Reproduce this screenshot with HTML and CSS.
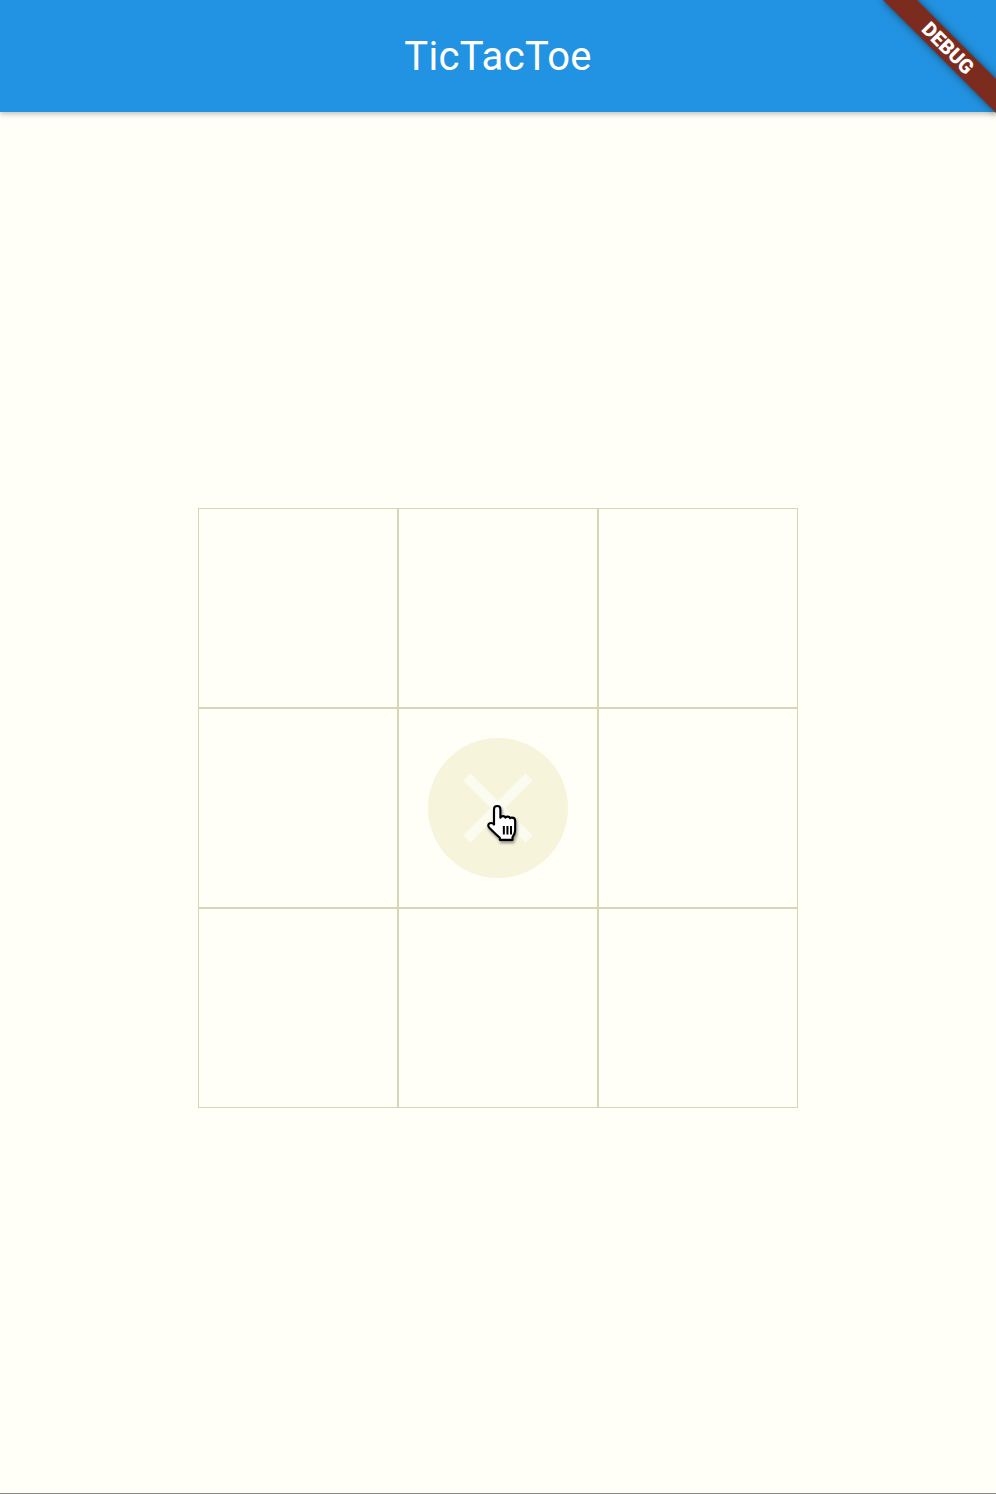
FILE: index.html
```html
<!DOCTYPE html>
<html lang="en">
<head>
<meta charset="utf-8">
<title>TicTacToe</title>
<link rel="stylesheet" href="styles.css">
</head>
<body>
<div class="app">
  <header class="appbar">
    <h1 class="title">TicTacToe</h1>
  </header>
  <main class="body">
    <div class="board">
      <div class="cell"></div>
      <div class="cell"></div>
      <div class="cell"></div>
      <div class="cell"></div>
      <div class="cell">
        <div class="splash">
          <span class="xbar xbar-a"></span>
          <span class="xbar xbar-b"></span>
        </div>
        <svg class="cursor" width="34" height="38" viewBox="0 0 32 36" aria-hidden="true">
          <path d="M10.5 1 C12.5 1 13.5 2.3 13.5 4 L13.5 12 C14 11 15 10.5 16 10.5 C17.3 10.5 18 11.2 18.3 12 C18.8 11.4 19.5 11 20.5 11 C21.7 11 22.5 11.8 22.7 12.6 C23.2 12.2 23.8 12 24.5 12 C26 12 27.5 13 27.5 15 L27.5 24 C27.5 27 26 29 25 30.5 L25 33 L13 33 L13 31 C10 28.5 6 24.5 3 21.5 C1.5 20 1.8 18 3.5 17.3 C5 16.7 6.5 17.3 7.5 18.5 L7.5 4 C7.5 2.3 8.5 1 10.5 1 Z" fill="#fff" stroke="#000" stroke-width="2" stroke-linejoin="round"/>
          <path d="M16.8 20 V28 M20.2 20 V28 M23.6 20 V28" stroke="#000" stroke-width="1.9"/>
        </svg>
      </div>
      <div class="cell"></div>
      <div class="cell"></div>
      <div class="cell"></div>
      <div class="cell"></div>
    </div>
  </main>
  <div class="banner-clip">
    <div class="banner">DEBUG</div>
  </div>
</div>
</body>
</html>
```

FILE: styles.css
```css
html, body {
  margin: 0;
  padding: 0;
}
body {
  background: #fffff8;
  font-family: Roboto, "Liberation Sans", sans-serif;
}
.app {
  position: relative;
  width: 996px;
  height: 1494px;
  overflow: hidden;
  box-sizing: border-box;
  border-bottom: 1px solid #8a8a84;
}
.appbar {
  position: relative;
  z-index: 2;
  height: 112px;
  background: #2293e2;
  display: flex;
  align-items: center;
  justify-content: center;
  box-shadow: 0 2px 4px rgba(0, 0, 0, 0.16), 0 4px 6px rgba(0, 0, 0, 0.07);
}
.title {
  margin: 0;
  padding-top: 2px;
  color: #ffffff;
  font-size: 40px;
  font-weight: 400;
  line-height: 1;
  letter-spacing: 0.3px;
}
.body {
  display: flex;
  justify-content: center;
  padding-top: 396px;
}
.board {
  display: grid;
  grid-template-columns: repeat(3, 200px);
  grid-template-rows: repeat(3, 200px);
}
.cell {
  position: relative;
  box-sizing: border-box;
  border: 1px solid #d8d6b9;
  display: flex;
  align-items: center;
  justify-content: center;
}
.splash {
  position: relative;
  width: 140px;
  height: 140px;
  border-radius: 50%;
  background: #f6f4da;
}
.xbar {
  position: absolute;
  left: 26px;
  top: 65px;
  width: 88px;
  height: 10px;
  background: rgba(255, 255, 255, 0.6);
}
.xbar-a {
  transform: rotate(45deg);
}
.xbar-b {
  transform: rotate(-45deg);
}
.cursor {
  position: absolute;
  left: 87px;
  top: 96px;
  filter: drop-shadow(1px 2px 1.5px rgba(0, 0, 0, 0.45));
}
.banner-clip {
  position: absolute;
  top: 0;
  right: 0;
  width: 200px;
  height: 200px;
  overflow: hidden;
  z-index: 5;
}
.banner {
  position: absolute;
  left: 72px;
  top: 36px;
  width: 160px;
  height: 24px;
  transform: rotate(45deg);
  background: #7c2c1e;
  box-shadow: 0 0 8px rgba(0, 0, 0, 0.5);
  color: #ffffff;
  font-family: Roboto, "Liberation Sans", sans-serif;
  font-size: 20px;
  font-weight: 900;
  line-height: 24px;
  text-align: center;
}
```
